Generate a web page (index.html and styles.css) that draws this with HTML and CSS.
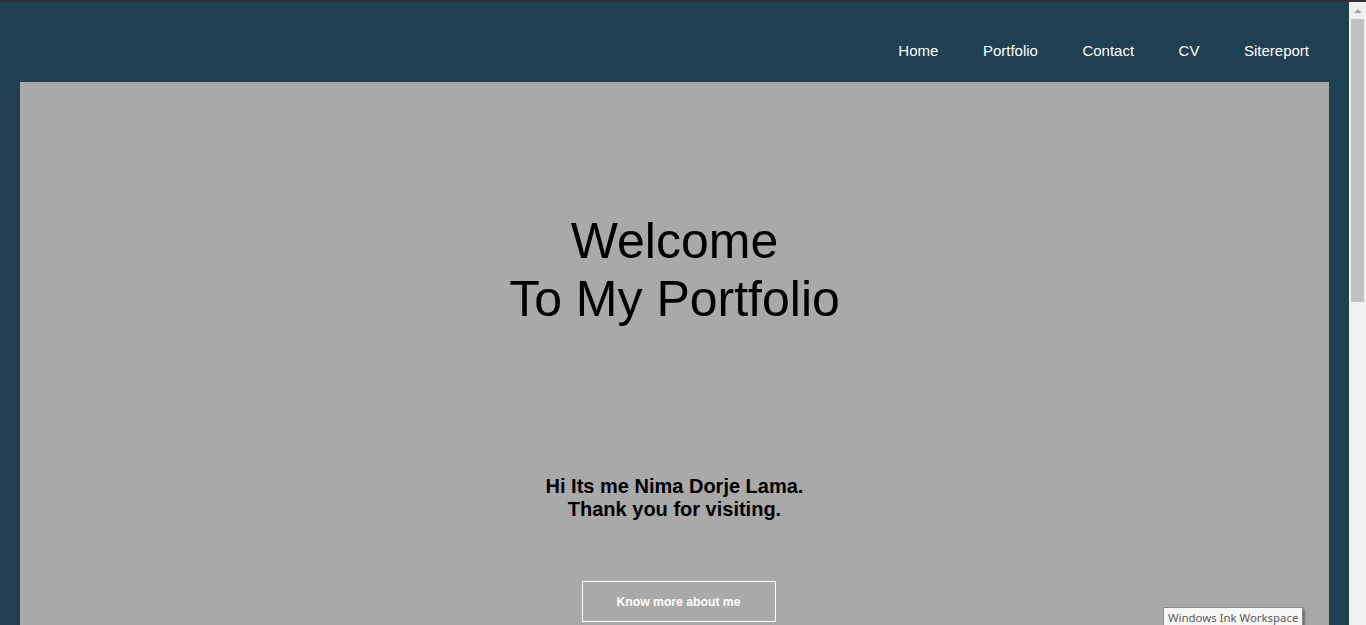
FILE: index.html
```html
<!DOCTYPE html>
<html lang="en">
<head>
<meta charset="utf-8">
<title>Portfolio</title>
<link rel="stylesheet" href="styles.css">
</head>
<body>
<div class="topline"></div>
<div class="app">
  <div class="page">
    <header class="header">
      <nav class="nav">
        <a href="#">Home</a>
        <a href="#">Portfolio</a>
        <a href="#">Contact</a>
        <a href="#">CV</a>
        <a href="#">Sitereport</a>
      </nav>
    </header>
    <main class="panel">
      <h1 class="title">Welcome<br>To My Portfolio</h1>
      <p class="intro">Hi Its me Nima Dorje Lama.<br>Thank you for visiting.</p>
      <a class="btn" href="#">Know more about me</a>
    </main>
  </div>
  <div class="scrollbar">
    <div class="arrow"></div>
    <div class="thumb"></div>
  </div>
</div>
<div class="tooltip">Windows Ink Workspace</div>
</body>
</html>
```
FILE: styles.css
```css
html, body {
  margin: 0;
  padding: 0;
  height: 625px;
  overflow: hidden;
}
body {
  background: #1f4053;
  font-family: "Liberation Sans", Arial, sans-serif;
  display: flex;
  flex-direction: column;
}
.topline {
  height: 2px;
  background: #2c2f33;
  flex: none;
}
.app {
  flex: 1;
  display: flex;
  min-height: 0;
}
.page {
  flex: 1;
  display: flex;
  flex-direction: column;
  min-width: 0;
}
.header {
  height: 80px;
  flex: none;
  display: flex;
  justify-content: flex-end;
  align-items: flex-start;
  padding-right: 40px;
}
.nav {
  display: flex;
  gap: 44.5px;
  padding-top: 40px;
}
.nav a {
  color: #ffffff;
  text-decoration: none;
  font-size: 15px;
  line-height: 17px;
}
.panel {
  flex: 1;
  margin: 0 20px;
  background: #a9a9a9;
  display: flex;
  flex-direction: column;
  align-items: center;
  padding-top: 130px;
}
.title {
  margin: 0;
  font-size: 50px;
  line-height: 58px;
  font-weight: normal;
  color: #000;
  text-align: center;
}
.intro {
  margin: 147px 0 0;
  font-size: 20px;
  line-height: 23px;
  font-weight: bold;
  color: #000;
  text-align: center;
}
.btn {
  margin-top: 60px;
  margin-left: 8px;
  width: 192px;
  height: 39px;
  border: 1px solid #ffffff;
  display: flex;
  align-items: center;
  justify-content: center;
  color: #ffffff;
  font-size: 12.2px;
  font-weight: bold;
  text-decoration: none;
}
.scrollbar {
  width: 17px;
  flex: none;
  background: #f0f0f0;
  display: flex;
  flex-direction: column;
  align-items: center;
}
.arrow {
  margin-top: 7px;
  width: 0;
  height: 0;
  border-left: 4px solid transparent;
  border-right: 4px solid transparent;
  border-bottom: 4px solid #a3a3a3;
}
.thumb {
  margin-top: 6px;
  width: 13px;
  height: 283px;
  background: #c1c1c1;
}
.tooltip {
  position: absolute;
  left: 1163px;
  top: 607px;
  padding: 2px 4px 3px;
  background: #f7f7f7;
  border: 1px solid #8a8a8a;
  box-shadow: 2px 2px 2px rgba(0,0,0,0.35);
  color: #575757;
  font-family: "Noto Sans", "Open Sans", sans-serif;
  font-size: 11.4px;
  line-height: 16px;
  white-space: nowrap;
}
```
